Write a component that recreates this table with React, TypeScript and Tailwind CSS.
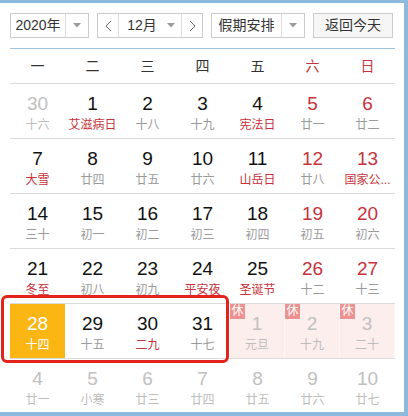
import React from "react";

type Day = {
  n: number;
  l: string;
  other?: boolean;
  red?: boolean;
  festival?: boolean;
  today?: boolean;
  rest?: boolean;
};

const rows: Day[][] = [
  [
    { n: 30, l: "十六", other: true },
    { n: 1, l: "艾滋病日", festival: true },
    { n: 2, l: "十八" },
    { n: 3, l: "十九" },
    { n: 4, l: "宪法日", festival: true },
    { n: 5, l: "廿一", red: true },
    { n: 6, l: "廿二", red: true },
  ],
  [
    { n: 7, l: "大雪", festival: true },
    { n: 8, l: "廿四" },
    { n: 9, l: "廿五" },
    { n: 10, l: "廿六" },
    { n: 11, l: "山岳日", festival: true },
    { n: 12, l: "廿八", red: true },
    { n: 13, l: "国家公...", red: true, festival: true },
  ],
  [
    { n: 14, l: "三十" },
    { n: 15, l: "初一" },
    { n: 16, l: "初二" },
    { n: 17, l: "初三" },
    { n: 18, l: "初四" },
    { n: 19, l: "初五", red: true },
    { n: 20, l: "初六", red: true },
  ],
  [
    { n: 21, l: "冬至", festival: true },
    { n: 22, l: "初八" },
    { n: 23, l: "初九" },
    { n: 24, l: "平安夜", festival: true },
    { n: 25, l: "圣诞节", festival: true },
    { n: 26, l: "十二", red: true },
    { n: 27, l: "十三", red: true },
  ],
  [
    { n: 28, l: "十四", today: true },
    { n: 29, l: "十五" },
    { n: 30, l: "二九", festival: true },
    { n: 31, l: "十七" },
    { n: 1, l: "元旦", other: true, rest: true },
    { n: 2, l: "十九", other: true, rest: true },
    { n: 3, l: "二十", other: true, rest: true },
  ],
  [
    { n: 4, l: "廿一", other: true },
    { n: 5, l: "小寒", other: true },
    { n: 6, l: "廿三", other: true },
    { n: 7, l: "廿四", other: true },
    { n: 8, l: "廿五", other: true },
    { n: 9, l: "廿六", other: true },
    { n: 10, l: "廿七", other: true },
  ],
];

const weekdays = ["一", "二", "三", "四", "五", "六", "日"];

const Caret = () => (
  <svg width="8" height="5" viewBox="0 0 8 5">
    <path d="M0 0 L8 0 L4 4.5 Z" fill="#9a9a9a" />
  </svg>
);

const Chevron = ({ dir }: { dir: "l" | "r" }) => (
  <svg width="7" height="12" viewBox="0 0 7 12">
    <polyline
      points={dir === "l" ? "6,1 1,6 6,11" : "1,1 6,6 1,11"}
      fill="none"
      stroke="#666"
      strokeWidth="1"
    />
  </svg>
);

const Cell = ({ d }: { d: Day }) => {
  let bg = "";
  if (d.today) bg = "bg-[#fcb614]";
  else if (d.rest) bg = "bg-[#fdeeee] border-r border-[#fff6f6]";

  let num = "text-[#111]";
  if (d.today) num = "text-white";
  else if (d.other) num = "text-[#c0c0c0]";
  else if (d.red) num = "text-[#c8323a]";

  let lunar = "text-[#9a9a9a]";
  if (d.today) lunar = "text-white";
  else if (d.other) lunar = "text-[#bdbdbd]";
  else if (d.festival) lunar = "text-[#c8323a]";

  return (
    <div className={`relative flex flex-col items-center pt-[8px] ${bg}`}>
      {d.rest && (
        <span className="absolute left-0 top-0 w-[15px] h-[15px] bg-[#ec9292] text-white text-[12px] leading-[15px] text-center">
          休
        </span>
      )}
      <span className={`text-[19px] leading-[24px] ${num}`}>{d.n}</span>
      <span className={`text-[12px] leading-[16px] mt-[1px] ${lunar}`}>{d.l}</span>
    </div>
  );
};

export default function App() {
  return (
    <div
      className="relative w-[408px] h-[416px] bg-white border-t-[3px] border-r-[4px] border-b-[4px] border-[#8cbadd] pl-[10px] pr-[9px] pt-[10px] overflow-hidden"
      style={{ fontFamily: '"Liberation Sans", "Noto Sans CJK SC", sans-serif' }}
    >
      <div className="flex items-center gap-[8px] h-[25px] text-[14px] text-[#333]">
        <div className="flex h-full w-[79px] border border-[#ccc] bg-white">
          <div className="flex-1 flex items-center justify-center">2020年</div>
          <div className="w-[23px] border-l border-[#ddd] flex items-center justify-center">
            <Caret />
          </div>
        </div>
        <div className="flex h-full w-[106px] border border-[#ccc] bg-white">
          <div className="w-[21px] border-r border-[#ddd] flex items-center justify-center">
            <Chevron dir="l" />
          </div>
          <div className="flex-1 flex items-center justify-center gap-[10px] pl-[2px]">
            <span>12月</span>
            <Caret />
          </div>
          <div className="w-[21px] border-l border-[#ddd] flex items-center justify-center">
            <Chevron dir="r" />
          </div>
        </div>
        <div className="flex h-full w-[94px] border border-[#ccc] bg-white">
          <div className="flex-1 flex items-center justify-center">假期安排</div>
          <div className="w-[23px] border-l border-[#ddd] flex items-center justify-center">
            <Caret />
          </div>
        </div>
        <div className="flex h-full w-[80px] items-center justify-center border border-[#ccc] bg-[#f6f6f6]">
          返回今天
        </div>
      </div>

      <div className="mt-[10px] w-[385px] h-[1px] bg-[#9dc4e0]" />

      <div className="w-[385px]">
        <div className="grid grid-cols-7 h-[35px] border-b border-[#dadada] text-[14px] items-center">
          {weekdays.map((w, i) => (
            <div key={w} className={`text-center ${i >= 5 ? "text-[#c8323a]" : "text-[#333]"}`}>
              {w}
            </div>
          ))}
        </div>
        {rows.map((r, i) => (
          <div
            key={i}
            className={`grid grid-cols-7 h-[55px] ${i < rows.length - 1 ? "border-b border-[#dadada]" : ""}`}
          >
            {r.map((d, j) => (
              <Cell key={j} d={d} />
            ))}
          </div>
        ))}
      </div>

      <div className="absolute left-[1px] top-[292px] w-[228px] h-[68px] border-[3px] border-[#e3221c] rounded-[6px]" />
    </div>
  );
}
